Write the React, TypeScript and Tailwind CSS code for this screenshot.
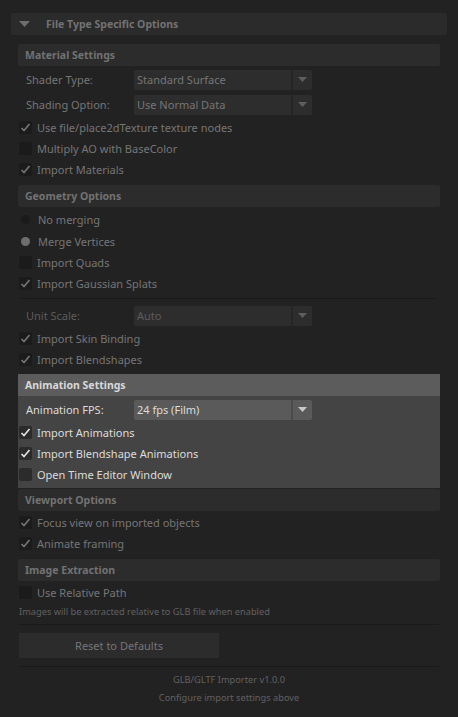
import React from 'react';

const font = { fontFamily: '"Noto Sans", "Open Sans", sans-serif' };

function Arrow({ className, w = 9, h = 5 }: { className: string; w?: number; h?: number }) {
  return (
    <svg width={w} height={h} viewBox={`0 0 ${w} ${h}`} className={className}>
      <path d={`M0 0 H${w} L${w / 2} ${h} Z`} />
    </svg>
  );
}

function Check({ className }: { className: string }) {
  return (
    <svg width="11" height="11" viewBox="0 0 11 11" className={className}>
      <path d="M1.5 6 L4 8.5 L9.5 2" fill="none" strokeWidth="1.7" />
    </svg>
  );
}

function SectionHeader({ title, bright = false }: { title: string; bright?: boolean }) {
  return (
    <div
      className={`h-[22px] flex items-center px-[7px] pt-[1px] font-bold text-[10.5px] ${
        bright ? 'bg-[#5c5c5c] text-[#d8d8d8]' : 'bg-[#2c2c2c] rounded-[2px] text-[#727272]'
      }`}
    >
      {title}
    </div>
  );
}

function Checkbox({ label, checked, bright = false }: { label: string; checked?: boolean; bright?: boolean }) {
  return (
    <div className="h-[21px] flex items-center">
      <div
        className={`w-[13px] h-[13px] rounded-[2px] flex items-center justify-center ${
          bright ? 'bg-[#2b2b2b]' : 'bg-[#1b1b1b]'
        }`}
      >
        {checked && <Check className={bright ? 'stroke-[#e0e0e0]' : 'stroke-[#737373]'} />}
      </div>
      <span className={`ml-[5px] pt-[2px] text-[11px] ${bright ? 'text-[#dcdcdc]' : 'text-[#767676]'}`}>{label}</span>
    </div>
  );
}

function Radio({ label, selected }: { label: string; selected?: boolean }) {
  return (
    <div className="h-[22px] flex items-center">
      <div className="w-[13px] flex justify-center">
        <div className={`w-[9px] h-[9px] rounded-full ${selected ? 'bg-[#6e6e6e]' : 'bg-[#1b1b1b]'}`} />
      </div>
      <span className="ml-[6px] pt-[2px] text-[11px] text-[#767676]">{label}</span>
    </div>
  );
}

function Dropdown({ label, value, bright = false, dim = false }: { label: string; value: string; bright?: boolean; dim?: boolean }) {
  const txt = bright ? 'text-[#dcdcdc]' : dim ? 'text-[#5c5c5c]' : 'text-[#767676]';
  const bg = bright ? 'bg-[#5a5a5a]' : 'bg-[#2d2d2d]';
  return (
    <div className="h-[25px] flex items-center">
      <span className={`w-[115px] pl-[7px] pt-[2px] text-[11px] ${txt}`}>{label}</span>
      <div className={`w-[178px] h-[20px] flex rounded-[2px] ${bg}`}>
        <div className={`flex-1 flex items-center pl-[3px] pt-[2px] text-[11px] ${txt}`}>{value}</div>
        <div className={`w-[2px] ${bright ? 'bg-[#4a4a4a]' : 'bg-[#262626]'}`} />
        <div className="w-[19px] flex items-center justify-center">
          <Arrow className={bright ? 'fill-[#c8c8c8]' : 'fill-[#5e5e5e]'} />
        </div>
      </div>
    </div>
  );
}

export default function App() {
  return (
    <div className="w-[458px] h-[717px] bg-[#222222] overflow-hidden" style={font}>
      <div className="pt-[13px] px-[11px]">
        <div className="h-[22px] bg-[#2b2b2b] rounded-[2px] flex items-center">
          <div className="w-[35px] pl-[8px]">
            <Arrow className="fill-[#6e6e6e]" w={11} h={6} />
          </div>
          <span className="font-bold pt-[2px] text-[10.5px] text-[#727272]">File Type Specific Options</span>
        </div>
      </div>

      <div className="mx-[18px] mt-[9px]">
        <SectionHeader title="Material Settings" />
        <div className="pl-[1px] pt-[1px]">
          <Dropdown label="Shader Type:" value="Standard Surface" />
          <Dropdown label="Shading Option:" value="Use Normal Data" />
          <Checkbox label="Use file/place2dTexture texture nodes" checked />
          <Checkbox label="Multiply AO with BaseColor" />
          <Checkbox label="Import Materials" checked />
        </div>

        <div className="mt-[5px]">
          <SectionHeader title="Geometry Options" />
        </div>
        <div className="pl-[1px] pt-[1px]">
          <Radio label="No merging" />
          <Radio label="Merge Vertices" selected />
          <Checkbox label="Import Quads" />
          <Checkbox label="Import Gaussian Splats" checked />
        </div>

        <div className="h-px bg-[#1a1a1a] mx-[2px] mt-[4px] mb-[4px]" />

        <div className="pl-[1px]">
          <Dropdown label="Unit Scale:" value="Auto" dim />
          <Checkbox label="Import Skin Binding" checked />
          <Checkbox label="Import Blendshapes" checked />
        </div>

        <div className="mt-[4px] bg-[#444444]">
          <SectionHeader title="Animation Settings" bright />
          <div className="pl-[1px] pt-[1px] pb-[3px]">
            <Dropdown label="Animation FPS:" value="24 fps (Film)" bright />
            <Checkbox label="Import Animations" checked bright />
            <Checkbox label="Import Blendshape Animations" checked bright />
            <Checkbox label="Open Time Editor Window" bright />
          </div>
        </div>

        <div className="mt-[1px]">
          <SectionHeader title="Viewport Options" />
        </div>
        <div className="pl-[1px] pt-[1px]">
          <Checkbox label="Focus view on imported objects" checked />
          <Checkbox label="Animate framing" checked />
        </div>

        <div className="mt-[5px]">
          <SectionHeader title="Image Extraction" />
        </div>
        <div className="pl-[1px] pt-[1px]">
          <Checkbox label="Use Relative Path" />
          <div className="text-[9.25px] text-[#616161] pt-[2px] h-[16px]">Images will be extracted relative to GLB file when enabled</div>
        </div>

        <div className="h-px bg-[#1a1a1a] mx-[1px] mt-[5px]" />
        <div className="pt-[7px] pl-[1px]">
          <button className="w-[200px] h-[25px] pt-[1px] bg-[#2c2c2c] text-[11px] text-[#767676]">Reset to Defaults</button>
        </div>
        <div className="h-px bg-[#1a1a1a] mx-[1px] mt-[8px]" />

        <div className="text-center text-[9.25px] text-[#616161] pt-[4px] leading-[18px]">
          <div>GLB/GLTF Importer v1.0.0</div>
          <div>Configure import settings above</div>
        </div>
      </div>
    </div>
  );
}
